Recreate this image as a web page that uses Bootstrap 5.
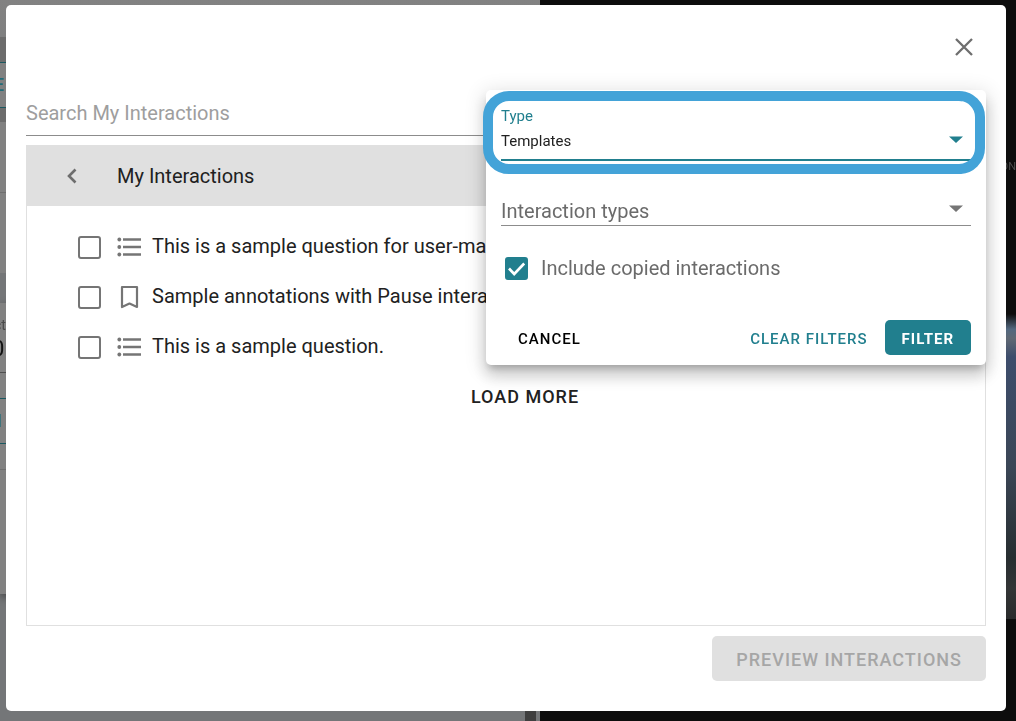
<!DOCTYPE html>
<html lang="en">
<head>
<meta charset="utf-8">
<meta name="viewport" content="width=device-width, initial-scale=1">
<title>My Interactions</title>
<link href="https://cdn.jsdelivr.net/npm/bootstrap@5.3.0/dist/css/bootstrap.min.css" rel="stylesheet">
<style>
  :root { --teal: #217f8e; --ink: #212121; --icon: #757575; --line: #8c8c8c; --pale: #e0e0e0; }
  body { font-family: Roboto, "Liberation Sans", sans-serif; font-size: 20px; line-height: 24px; color: var(--ink); background: #0d0d0d; }

  /* Dimmed page behind the dialog */
  .page-behind { z-index: 0; grid-template-columns: 540fr 476fr; }
  .editor { background: linear-gradient(#828282, #747678 25%, #747678); }
  .editor-bar { height: 85px; margin-top: 37px; padding-top: 25px; background: #6c6c6c; }
  .ghost-btn { height: 46px; width: 100%; border: 1px solid #1b5860; border-width: 1px 0; background: #818181; color: #1f6c79; font-size: 18px; line-height: 44px; font-weight: 500; }
  .ghost-letter { margin-left: -6px; }
  .ghost-letter-thin { margin-left: -3px; }
  .editor-sheet { height: 151px; padding-top: 70px; background: #818181; }
  .editor-card { height: 291px; margin-top: 30px; padding-top: 12px; background: #818181; box-shadow: 0 3px 8px rgba(0,0,0,.4); }
  .card-caption { font-size: 14px; line-height: 20px; margin-left: -6px; color: #4a4a4a; }
  .card-value { font-size: 22px; line-height: 28px; margin-left: -8px; color: #111; }
  .card-gap { height: 9px; }
  .card-space { height: 25px; }
  .hair { border-top: 1px solid #6f6f6f; }
  .hair-dark { border-top: 1px solid #4f4f4f; }
  .splitter { width: 11px; height: 12px; margin-right: 4px; background: #3f3f3f; }
  .player-pic { height: 305px; background: linear-gradient(#0d0d0d, #53687f 5%, #5f6873 8%, #3d4d6c 14%, #3b4656 50%, #272d30 80%, #333536 90%, #292a2b); }
  .player-menu { height: 314px; padding-top: 20px; color: #4d4d4d; font-size: 11px; line-height: 12px; }

  /* Dialog */
  .dialog { z-index: 1; margin: 5px 10px 10px 6px; padding: 20px; min-height: calc(100vh - 15px); border-radius: 5px; background: #fff; }
  .dialog-top { height: 64px; }
  .close-btn { width: 45px; height: 44px; border: 0; background: none; }
  .search { height: 47px; border: 0; border-bottom: 1px solid var(--line); outline: 0; padding: 2px 0 0; }
  .search::placeholder { color: #9e9e9e; opacity: 1; }
  .browser { border: 1px solid var(--pale); margin-top: 9px; }
  .browser-head { background: var(--pale); height: 60px; padding-left: 34px; gap: 34px; }
  .plain-btn { border: 0; background: none; padding: 0; color: inherit; }
  .items { padding: 16px 0 0 51px; }
  .item { height: 50px; }
  .item label { padding-bottom: 2px; }
  .tick { appearance: none; width: 23px; height: 23px; margin: 0 16px 0 0; flex: none; border: 2px solid var(--icon); border-radius: 3px; background: #fff; }
  .item svg { margin-right: 10px; flex: none; }
  .load-row { padding-left: 38px; height: 50px; }
  .load-btn { font-size: 18px; font-weight: 500; letter-spacing: 1px; }
  .footer-row { margin: 10px 0; }
  .preview-btn { height: 45px; padding: 2px 24px 0; border: 0; border-radius: 5px; background: var(--pale); color: #a6a6a6; font-size: 18px; font-weight: 500; letter-spacing: 1px; }

  /* Filter popup, lying over the list */
  .filter-pop { z-index: 2; top: 85px; right: 20px; width: min(500px, 100% - 40px); padding: 17px 15px 10px; border-radius: 5px; background: #fff; box-shadow: 0 6px 7px -3px rgba(0,0,0,.2), 0 11px 15px 1px rgba(0,0,0,.14), 0 4px 20px 3px rgba(0,0,0,.12); }
  .focus-ring-box { inset: 1px 1px auto -3px; height: 83px; border: 10px solid #43a3d8; border-radius: 26px; pointer-events: none; }
  .drop { appearance: none; width: 100%; border: 0; border-radius: 0; outline: 0; padding: 0; background: transparent; display: block; }
  .type-label { font-size: 15px; line-height: 18px; color: var(--teal); display: block; }
  .type-drop { height: 36px; font-size: 15px; color: var(--ink); padding-bottom: 2px; border-bottom: 2px solid var(--teal); }
  .kinds { margin-top: 32px; }
  .kinds-drop { height: 33px; color: #6b6b6b; padding-top: 4px; border-bottom: 1px solid var(--line); }
  .arrow { right: 8px; pointer-events: none; }
  .arrow-type { top: 29px; }
  .arrow-kinds { top: 12px; }
  .tick-on { border-color: var(--teal); background: var(--teal) url("data:image/svg+xml,%3Csvg xmlns='http://www.w3.org/2000/svg' viewBox='0 0 19 19'%3E%3Cpath d='M2 9.5 7.2 15 17.2 4.5' fill='none' stroke='white' stroke-width='2.6'/%3E%3C/svg%3E") center/19px no-repeat; }
  .copied { color: #6b6b6b; margin: 30px 0 0 4px; height: 24px; }
  .copied .tick { margin-right: 13px; }
  .actions { margin-top: 40px; }
  .act { height: 35px; padding: 2px 17px 0; border: 0; border-radius: 5px; background: none; font-size: 15px; font-weight: 500; letter-spacing: 1px; }
  .act-clear { color: var(--teal); }
  .act-go { color: #fff; background: var(--teal); font-weight: 700; }
</style>
</head>
<body>
<div class="page-behind position-fixed top-0 start-0 w-100 h-100 d-grid overflow-hidden" aria-hidden="true">
  <div class="editor d-flex">
    <div class="flex-grow-1 d-flex flex-column">
      <div class="editor-bar flex-shrink-0"><div class="ghost-btn"><span class="ghost-letter">E</span></div></div>
      <div class="editor-sheet flex-shrink-0"><div class="hair"></div></div>
      <div class="editor-card flex-shrink-0">
        <div class="card-caption">ct</div>
        <div class="card-value">0</div>
        <div class="card-gap"></div>
        <div class="hair-dark"></div>
        <div class="card-space"></div>
        <div class="ghost-btn"><span class="ghost-letter-thin">I</span></div>
        <div class="card-space"></div>
        <div class="hair"></div>
      </div>
    </div>
    <div class="splitter align-self-end"></div>
  </div>
  <div>
    <div class="player-menu d-flex justify-content-end align-items-center"><span>ON</span></div>
    <div class="player-pic"></div>
  </div>
</div>

<main class="dialog position-relative d-flex flex-column" role="dialog" aria-label="My Interactions">
  <div class="dialog-top d-flex justify-content-end align-items-start">
    <button class="close-btn d-flex align-items-center justify-content-center p-0" type="button" aria-label="Close">
      <svg width="18" height="18" viewBox="0 0 18 18" fill="none" stroke="#6e6e6e" stroke-width="2.3"><path d="M1 1 17 17M17 1 1 17"/></svg>
    </button>
  </div>
  <input class="search w-100" type="search" placeholder="Search My Interactions" aria-label="Search My Interactions">

  <section class="browser flex-grow-1">
    <div class="browser-head d-flex align-items-center">
      <button class="plain-btn d-flex" type="button" aria-label="Back">
        <svg width="22" height="22" viewBox="0 0 22 22" fill="none" stroke="#6e6e6e" stroke-width="2.6"><path d="M14.500 4.500 8 11 14.500 17.500"/></svg>
      </button>
      <span>My Interactions</span>
    </div>
    <div class="items">
      <div class="item d-flex align-items-center">
        <input class="tick" type="checkbox" id="q1">
        <svg width="25" height="20" viewBox="0 0 25 20" fill="#757575"><circle cx="2.3" cy="2.5" r="1.900"/><circle cx="2.3" cy="10" r="1.900"/><circle cx="2.3" cy="17.5" r="1.900"/><path d="M6 1.300h18v2.400H6zM6 8.800h18v2.400H6zM6 16.300h18v2.400H6z"/></svg>
        <label class="text-nowrap" for="q1">This is a sample question for user-made types</label>
      </div>
      <div class="item d-flex align-items-center">
        <input class="tick" type="checkbox" id="q2">
        <svg width="25" height="24" viewBox="0 0 25 24" fill="none" stroke="#757575" stroke-width="2.2"><path d="M5 2h15v20l-7.500-3.400L5 22z" stroke-linejoin="round"/></svg>
        <label class="text-nowrap" for="q2">Sample annotations with Pause interactions</label>
      </div>
      <div class="item d-flex align-items-center">
        <input class="tick" type="checkbox" id="q3">
        <svg width="25" height="20" viewBox="0 0 25 20" fill="#757575"><circle cx="2.3" cy="2.5" r="1.900"/><circle cx="2.3" cy="10" r="1.900"/><circle cx="2.3" cy="17.5" r="1.900"/><path d="M6 1.300h18v2.400H6zM6 8.800h18v2.400H6zM6 16.300h18v2.400H6z"/></svg>
        <label class="text-nowrap" for="q3">This is a sample question.</label>
      </div>
    </div>
    <div class="load-row d-flex align-items-center justify-content-center">
      <button class="plain-btn load-btn" type="button">LOAD MORE</button>
    </div>
  </section>

  <div class="footer-row d-flex justify-content-end">
    <button class="preview-btn" type="button" disabled>PREVIEW INTERACTIONS</button>
  </div>

  <form class="filter-pop position-absolute">
    <div class="position-relative">
      <label class="type-label" for="type">Type</label>
      <select class="drop type-drop" id="type"><option>Templates</option></select>
      <svg class="arrow arrow-type position-absolute" width="14" height="7" viewBox="0 0 14 7"><path d="M0 .5h14L7 7z" fill="#217f8e"/></svg>
    </div>
    <div class="kinds position-relative">
      <select class="drop kinds-drop" aria-label="Interaction types"><option>Interaction types</option></select>
      <svg class="arrow arrow-kinds position-absolute" width="14" height="7" viewBox="0 0 14 7"><path d="M0 .5h14L7 7z" fill="#757575"/></svg>
    </div>
    <div class="copied d-flex align-items-center">
      <input class="tick tick-on" type="checkbox" id="copied" checked>
      <label for="copied">Include copied interactions</label>
    </div>
    <div class="actions d-flex align-items-center">
      <button class="act me-auto" type="button">CANCEL</button>
      <button class="act act-clear" type="button">CLEAR FILTERS</button>
      <button class="act act-go" type="submit">FILTER</button>
    </div>
    <div class="focus-ring-box position-absolute"></div>
  </form>
</main>
<script src="https://cdn.jsdelivr.net/npm/bootstrap@5.3.0/dist/js/bootstrap.bundle.min.js"></script>
</body>
</html>
